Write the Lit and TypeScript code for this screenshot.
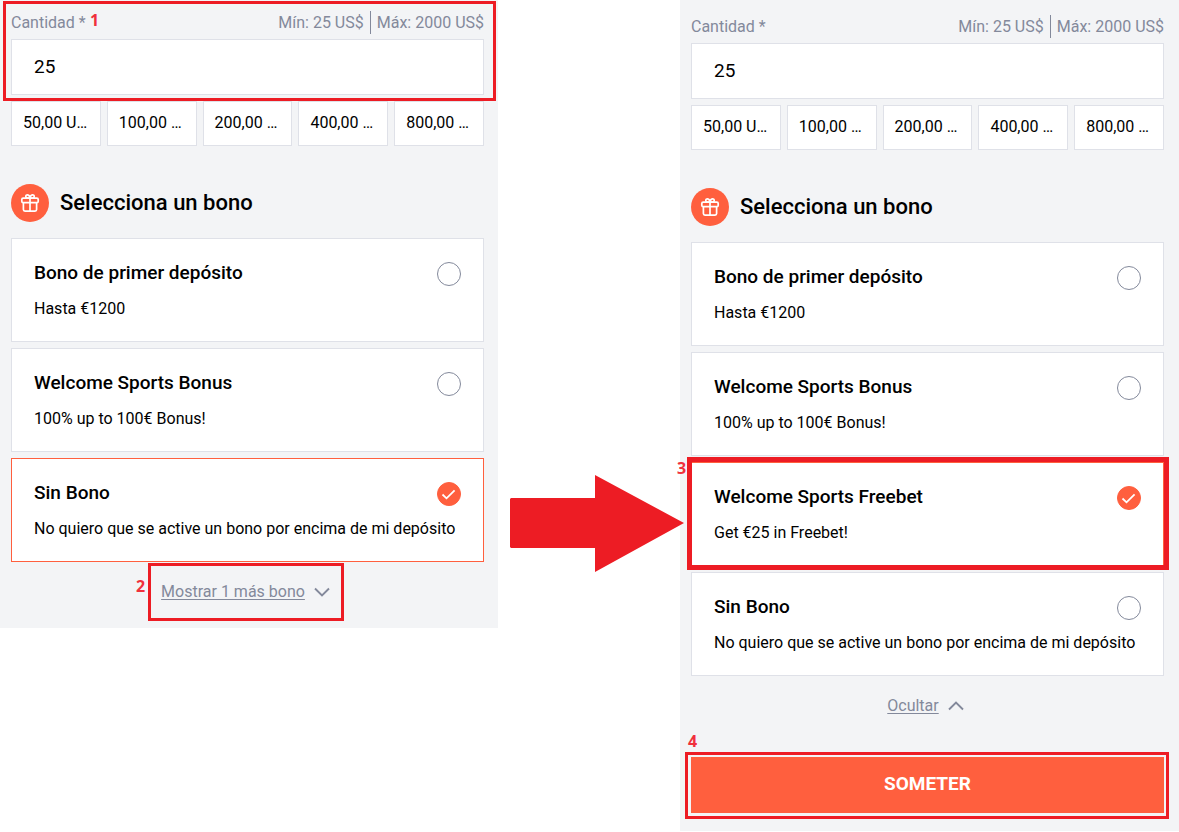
import { LitElement, html, css, svg, nothing } from "lit";
import { customElement, property } from "lit/decorators.js";
import { classMap } from "lit/directives/class-map.js";

interface Bonus {
  title: string;
  text: string;
  checked?: boolean;
  mark?: string;
}

const AMOUNTS = ["50,00 US$", "100,00 US$", "200,00 US$", "400,00 US$", "800,00 US$"];

const FIRST: Bonus = { title: "Bono de primer depósito", text: "Hasta €1200" };
const WELCOME: Bonus = { title: "Welcome Sports Bonus", text: "100% up to 100€ Bonus!" };
const FREEBET: Bonus = {
  title: "Welcome Sports Freebet",
  text: "Get €25 in Freebet!",
  checked: true,
  mark: "3",
};
const NONE: Bonus = {
  title: "Sin Bono",
  text: "No quiero que se active un bono por encima de mi depósito",
};

@customElement("deposit-form")
export class DepositForm extends LitElement {
  @property({ attribute: false }) bonuses: Bonus[] = [];
  @property({ type: Boolean, reflect: true }) expanded = false;

  static styles = css`
    :host {
      display: block;
      box-sizing: border-box;
      padding: 11px 14px 24px 11px;
      background: #f3f4f6;
      color: #000;
      font: 16px/24px Roboto, sans-serif;
    }
    :host([expanded]) {
      padding: 15px 15px 18px 11px;
    }
    * {
      box-sizing: border-box;
    }
    button,
    input {
      margin: 0;
      font: inherit;
      color: inherit;
    }
    .amount,
    .more,
    .submit,
    .card {
      position: relative;
    }
    .legend {
      display: flex;
      justify-content: space-between;
      height: 28px;
      color: #83899b;
      line-height: 24px;
    }
    .limits {
      display: flex;
      height: 23px;
    }
    .limits span + span {
      margin-left: 6px;
      padding-left: 6px;
      border-left: 1px solid #83899b;
    }
    .field {
      display: block;
      width: 100%;
      height: 56px;
      padding: 0 22px 2px;
      border: 1px solid #dfe1e8;
      border-radius: 0;
      background: #fff;
      font-size: 19px;
      outline: none;
    }
    .chips {
      display: grid;
      grid-template-columns: repeat(5, minmax(0, 1fr));
      gap: 6px;
      margin-top: 6px;
    }
    .chip {
      height: 45px;
      padding: 0 11px 2px;
      border: 1px solid #dfe1e8;
      background: #fff;
      text-align: left;
      white-space: nowrap;
      overflow: hidden;
      text-overflow: ellipsis;
    }
    .heading {
      display: flex;
      align-items: center;
      gap: 11px;
      margin: 38px 0 16px;
      font-size: 22px;
      line-height: 38px;
      font-weight: 500;
    }
    .gift {
      width: 38px;
      height: 38px;
    }
    .cards {
      display: grid;
      gap: 6px;
      margin: 0;
      padding: 0;
      border: 0;
      min-width: 0;
    }
    .card {
      display: block;
      padding: 22px 22px 20px;
      border: 1px solid #dfe1e8;
      background: #fff;
    }
    .card.checked {
      border-color: #ff5f3e;
    }
    .top {
      display: flex;
      justify-content: space-between;
      height: 36px;
    }
    .title {
      font-size: 19px;
      font-weight: 500;
    }
    .text {
      display: block;
      line-height: 24px;
    }
    .pick {
      display: grid;
      width: 24px;
      height: 24px;
      margin-top: 1px;
    }
    .pick > * {
      grid-area: 1 / 1;
    }
    .radio {
      appearance: none;
      width: 24px;
      height: 24px;
      border: 1px solid #83899b;
      border-radius: 50%;
      background: #fff;
    }
    .radio:checked {
      border-color: #ff5f3e;
      background: #ff5f3e;
    }
    .tick {
      pointer-events: none;
    }
    .more {
      display: flex;
      align-items: center;
      gap: 9px;
      width: fit-content;
      margin: 18px auto 0;
      padding: 0 4px 0 0;
      border: 0;
      background: none;
      color: #83899b;
    }
    .more u {
      text-underline-offset: 2px;
    }
    .submit {
      display: block;
      width: 100%;
      height: 56px;
      margin-top: 39px;
      padding: 0 0 3px;
      border: 0;
      background: #ff5f3e;
      color: #fff;
      font-size: 19px;
      font-weight: 700;
    }
    .frame {
      position: absolute;
      border: 3px solid #ed1c24;
      pointer-events: none;
      z-index: 1;
    }
    .around-amount {
      inset: -10px -12px -6px -8px;
    }
    .around-more {
      inset: -17px -10px -17px -13px;
    }
    .around-card {
      inset: -6px -6px -5px -5px;
      border-width: 5px;
    }
    .around-submit {
      inset: -5px -5px -6px -6px;
    }
    .number {
      position: absolute;
      color: #f0303c;
      font: 700 16px/20px "Open Sans", sans-serif;
    }
    .at-amount {
      left: 79px;
      top: -1px;
    }
    .at-more {
      left: -25px;
      top: -4px;
    }
    .at-card {
      left: -15px;
      top: -5px;
    }
    .at-submit {
      left: -3px;
      top: -26px;
    }
  `;

  private chevron(up: boolean) {
    return html`<svg width="16" height="10" viewBox="0 0 16 10" fill="none" aria-hidden="true">
      <path d=${up ? "M1 8.5 8 1.5l7 7" : "M1 1.5l7 7 7-7"} stroke="#83899b" stroke-width="1.9" />
    </svg>`;
  }

  private gift() {
    return html`<svg class="gift" viewBox="0 0 38 38" aria-hidden="true">
      <circle cx="19" cy="19" r="19" fill="#ff5f3e" />
      ${svg`<g fill="none" stroke="#fff" stroke-width="1.7" stroke-linejoin="round">
        <rect x="10.8" y="14.2" width="16.4" height="4.4" rx="1.4" />
        <path d="M12.4 18.6v7a1.6 1.6 0 0 0 1.6 1.6h10a1.6 1.6 0 0 0 1.6-1.6v-7" />
        <path d="M19 14.2v13" />
        <path d="M19 14.2h-2.6a1.7 1.7 0 1 1 .2-3.400c1.500 .2 2.300 1.700 2.400 3.400z" />
        <path d="M19 14.2h2.6a1.700 1.700 0 1 0-.2-3.400c-1.500 .2-2.300 1.700-2.400 3.400z" />
      </g>`}
    </svg>`;
  }

  private card(bonus: Bonus) {
    return html`<label class=${classMap({ card: true, checked: !!bonus.checked })}>
      <span class="top">
        <span class="title">${bonus.title}</span>
        <span class="pick">
          <input class="radio" type="radio" name="bonus" ?checked=${!!bonus.checked} />
          ${bonus.checked
            ? html`<svg class="tick" width="24" height="24" viewBox="0 0 24 24" fill="none" aria-hidden="true">
                <path d="M5.500 12.500 9.500 16.300 17.600 8.300" stroke="#fff" stroke-width="1.800" />
              </svg>`
            : nothing}
        </span>
      </span>
      <span class="text">${bonus.text}</span>
      ${bonus.mark
        ? html`<span class="frame around-card"></span><span class="number at-card">${bonus.mark}</span>`
        : nothing}
    </label>`;
  }

  render() {
    const framed = !this.expanded;
    return html`
      <div class="amount">
        <div class="legend">
          <label for="amount">Cantidad *</label>
          <span class="limits"><span>Mín: 25 US$</span><span>Máx: 2000 US$</span></span>
        </div>
        <input id="amount" class="field" type="text" inputmode="numeric" value="25" />
        ${framed
          ? html`<span class="frame around-amount"></span><span class="number at-amount">1</span>`
          : nothing}
      </div>
      <div class="chips">
        ${AMOUNTS.map((amount) => html`<button class="chip" type="button">${amount}</button>`)}
      </div>
      <h2 class="heading">${this.gift()}<span>Selecciona un bono</span></h2>
      <fieldset class="cards" aria-label="Selecciona un bono">
        ${this.bonuses.map((bonus) => this.card(bonus))}
      </fieldset>
      <button class="more" type="button">
        <u>${this.expanded ? "Ocultar" : "Mostrar 1 más bono"}</u>${this.chevron(this.expanded)}
        ${framed
          ? html`<span class="frame around-more"></span><span class="number at-more">2</span>`
          : nothing}
      </button>
      ${this.expanded
        ? html`<button class="submit" type="submit">
            SOMETER<span class="frame around-submit"></span><span class="number at-submit">4</span>
          </button>`
        : nothing}
    `;
  }
}

@customElement("app-root")
export class AppRoot extends LitElement {
  static styles = css`
    :host {
      display: block;
      background: #fff;
    }
    .steps {
      display: grid;
      grid-template-columns: minmax(0, 498fr) minmax(0, 182fr) minmax(0, 499fr);
      align-items: start;
    }
    .between {
      position: relative;
      z-index: 2;
      margin: 475px -4px 0 12px;
    }
    .arrow {
      display: block;
      width: 100%;
    }
  `;

  render() {
    return html`<main class="steps">
      <deposit-form .bonuses=${[FIRST, WELCOME, { ...NONE, checked: true }]}></deposit-form>
      <div class="between">
        <svg class="arrow" viewBox="0 0 174 97" aria-hidden="true">
          <path d="M1 23H85V0L174 48 85 97V73H1L0 72V24Z" fill="#ed1c24" />
        </svg>
      </div>
      <deposit-form expanded .bonuses=${[FIRST, WELCOME, FREEBET, NONE]}></deposit-form>
    </main>`;
  }
}
